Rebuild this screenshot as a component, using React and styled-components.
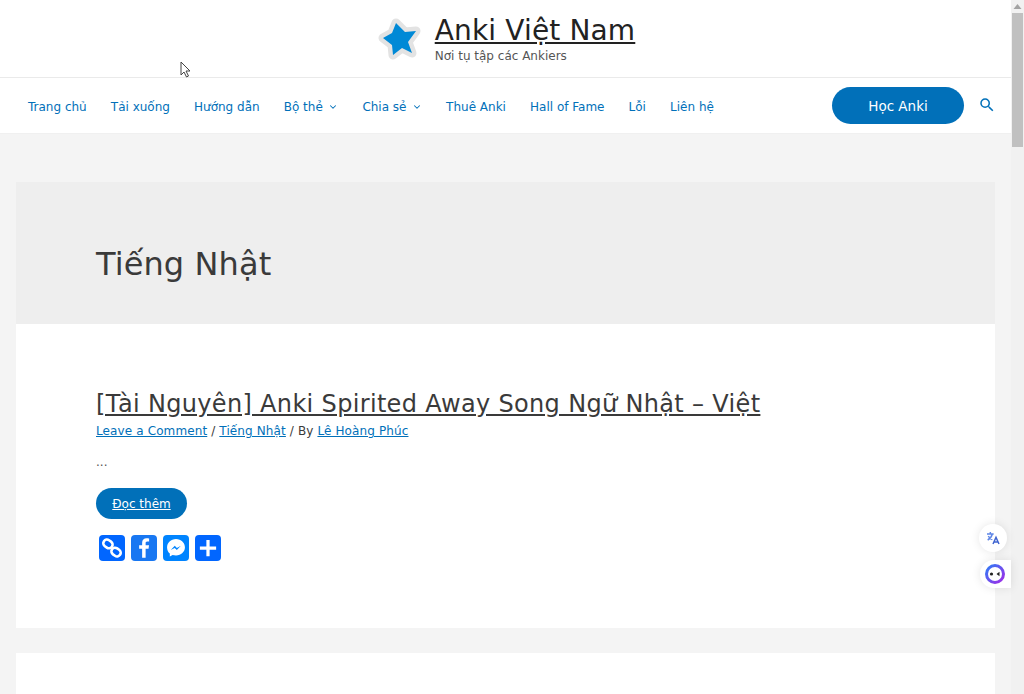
import React from 'react';
import styled, { createGlobalStyle } from 'styled-components';
import { ChevronDown } from 'lucide-react';

const GlobalStyle = createGlobalStyle`
  html, body {
    margin: 0;
    padding: 0;
    height: 100%;
    overflow: hidden;
    background: #f4f4f4;
  }
  #root { height: 100%; }
  * { box-sizing: border-box; }
`;

const Viewport = styled.div`
  position: relative;
  display: flex;
  width: 1024px;
  height: 694px;
  overflow: hidden;
  font-family: 'DejaVu Sans', Verdana, sans-serif;
  color: #3a3a3a;
`;

const Page = styled.div`
  flex: 1;
  min-width: 0;
  background: #f4f4f4;
`;

const Header = styled.header`
  background: #fff;
  border-bottom: 1px solid #f0f0f0;
`;

const Branding = styled.div`
  height: 78px;
  display: flex;
  align-items: center;
  justify-content: center;
  gap: 13px;
  border-bottom: 1px solid #eaeaea;
`;

const BrandText = styled.div`
  display: flex;
  flex-direction: column;
`;

const SiteTitle = styled.a`
  font-size: 28px;
  line-height: 36px;
  letter-spacing: 0.15px;
  color: #222;
  text-decoration: underline;
`;

const Tagline = styled.span`
  margin-top: -1px;
  font-size: 12px;
  line-height: 16px;
  color: #555;
`;

const NavBar = styled.nav`
  height: 55px;
  display: flex;
  align-items: center;
  padding: 0 15px 0 28px;
`;

const NavList = styled.div`
  flex: 1;
  display: flex;
  align-items: center;
  gap: 24.1px;
`;

const NavLink = styled.a`
  display: flex;
  align-items: center;
  gap: 5.5px;
  padding-top: 2px;
  font-size: 12px;
  color: #0170b9;
  white-space: nowrap;
`;

const CtaButton = styled.a`
  width: 132px;
  height: 37px;
  display: flex;
  align-items: center;
  justify-content: center;
  border-radius: 19px;
  background: #0170b9;
  color: #fff;
  font-size: 13.5px;
`;

const SearchIcon = styled.svg`
  width: 18px;
  height: 18px;
  margin-left: 14px;
  margin-bottom: 2px;
  fill: #0170b9;
`;

const Main = styled.main`
  padding: 48px 16px 0;
`;

const Banner = styled.section`
  height: 142px;
  display: flex;
  align-items: center;
  padding: 22px 0 0 80px;
  background: #eee;
`;

const BannerTitle = styled.h1`
  margin: 0;
  font-size: 32px;
  font-weight: 400;
  letter-spacing: 0.1px;
  color: #3a3a3a;
`;

const Article = styled.article`
  height: 304px;
  padding: 65px 80px 0;
  background: #fff;
`;

const ArticleTitle = styled.a`
  display: block;
  font-size: 24px;
  line-height: 30px;
  letter-spacing: 0.33px;
  color: #3a3a3a;
  text-decoration: underline;
`;

const Meta = styled.div`
  font-size: 12px;
  line-height: 18px;
  letter-spacing: 0.12px;
  margin-top: 3px;
  color: #3a3a3a;
`;

const MetaLink = styled.a`
  color: #0170b9;
  text-decoration: underline;
`;

const Excerpt = styled.p`
  margin: 13px 0 0;
  font-size: 12px;
  line-height: 18px;
  color: #555;
`;

const ReadMore = styled.a`
  display: inline-flex;
  align-items: center;
  justify-content: center;
  width: 91px;
  height: 31px;
  margin-top: 17px;
  border-radius: 16px;
  background: #0170b9;
  color: #fff;
  font-size: 12px;
  text-decoration: underline;
`;

const ShareRow = styled.div`
  display: flex;
  gap: 6px;
  margin-top: 16px;
  padding-left: 3px;
`;

const ShareIcon = styled.svg`
  display: block;
  width: 26px;
  height: 26px;
  border-radius: 4px;
  background: ${(p) => p.$bg};
`;

const NextCard = styled.div`
  height: 60px;
  margin-top: 25px;
  background: #fff;
`;

const Scrollbar = styled.div`
  flex: none;
  width: 13px;
  display: flex;
  flex-direction: column;
  align-items: center;
  background: #f1f1f1;
`;

const ScrollArrow = styled.svg`
  width: 13px;
  height: 13px;
  fill: #a3a3a3;
`;

const ScrollThumb = styled.div`
  width: 11px;
  height: 134px;
  background: #c0c0c0;
`;

const FloatButton = styled.div`
  position: absolute;
  top: ${(p) => p.$top}px;
  left: ${(p) => p.$left}px;
  width: ${(p) => p.$w}px;
  height: 28px;
  display: flex;
  align-items: center;
  padding-left: ${(p) => (p.$tab ? 4 : 6)}px;
  background: #fff;
  border-radius: ${(p) => (p.$tab ? '14px 0 0 14px' : '50%')};
  box-shadow: 0 0 10px rgba(0, 0, 0, 0.1);
`;

const Cursor = styled.svg`
  position: absolute;
  top: 61px;
  left: 180px;
  width: 12px;
  height: 18px;
`;

const StarLogo = () => (
  <svg width="46" height="48" viewBox="0 0 46 48" style={{ display: 'block' }}>
    <path
      d="M20 8 L29 17 L40 16 L32 27 L36 38 L26 33 L17 40 L16 30 L7 23 L16 18 Z"
      fill="#0089d6"
      stroke="#e3e3e3"
      strokeWidth="9"
      strokeLinejoin="round"
      paintOrder="stroke"
    />
  </svg>
);

const navItems = [
  { label: 'Trang chủ' },
  { label: 'Tải xuống' },
  { label: 'Hướng dẫn' },
  { label: 'Bộ thẻ', caret: true },
  { label: 'Chia sẻ', caret: true },
  { label: 'Thuê Anki' },
  { label: 'Hall of Fame' },
  { label: 'Lỗi' },
  { label: 'Liên hệ' },
];

const App = () => (
  <Viewport>
    <GlobalStyle />
    <Page>
      <Header>
        <Branding>
          <StarLogo />
          <BrandText>
            <SiteTitle>Anki Việt Nam</SiteTitle>
            <Tagline>Nơi tụ tập các Ankiers</Tagline>
          </BrandText>
        </Branding>
        <NavBar>
          <NavList>
            {navItems.map((item) => (
              <NavLink key={item.label}>
                {item.label}
                {item.caret && <ChevronDown size={10} strokeWidth={2.5} />}
              </NavLink>
            ))}
          </NavList>
          <CtaButton>Học Anki</CtaButton>
          <SearchIcon viewBox="0 0 24 24">
            <path d="M15.5 14h-.79l-.28-.27A6.47 6.47 0 0 0 16 9.5 6.5 6.5 0 1 0 9.5 16c1.61 0 3.09-.59 4.23-1.57l.27.28v.79l5 4.99L20.49 19l-4.99-5zm-6 0C7.01 14 5 11.99 5 9.5S7.01 5 9.5 5 14 7.01 14 9.5 11.99 14 9.5 14z" />
          </SearchIcon>
        </NavBar>
      </Header>
      <Main>
        <Banner>
          <BannerTitle>Tiếng Nhật</BannerTitle>
        </Banner>
        <Article>
          <ArticleTitle>[Tài Nguyên] Anki Spirited Away Song Ngữ Nhật – Việt</ArticleTitle>
          <Meta>
            <MetaLink>Leave a Comment</MetaLink> / <MetaLink>Tiếng Nhật</MetaLink> / By{' '}
            <MetaLink>Lê Hoàng Phúc</MetaLink>
          </Meta>
          <Excerpt>...</Excerpt>
          <ReadMore>Đọc thêm</ReadMore>
          <ShareRow>
            <ShareIcon $bg="#0166ff" viewBox="0 0 32 32" fill="none" stroke="#fff" strokeWidth="3.2">
              <rect x="5" y="6.5" width="12" height="9" rx="4.5" transform="rotate(35 11 11)" />
              <rect x="15" y="16.5" width="12" height="9" rx="4.5" transform="rotate(35 21 21)" />
            </ShareIcon>
            <ShareIcon $bg="#1877f2" viewBox="0 0 32 32" fill="#fff">
              <path d="M18 28V17h3.6l.6-4.3H18v-2.6c0-1.2.4-2.1 2.1-2.1h2.2V4.2c-.4 0-1.7-.2-3.2-.2-3.2 0-5.4 2-5.4 5.5v3.2H10V17h3.7v11H18z" />
            </ShareIcon>
            <ShareIcon $bg="#0084ff" viewBox="0 0 32 32">
              <path
                fill="#fff"
                d="M16 5C9.7 5 5 9.500 5 15.300c0 3.100 1.300 5.700 3.400 7.500v3.700l3.400-1.900c1.300.4 2.700.6 4.200.6 6.300 0 11-4.500 11-10S22.300 5 16 5z"
              />
              <path fill="#0084ff" d="M9.500 18.600l5-5.300 2.600 2.700 4.900-2.700-5 5.300-2.600-2.700z" />
            </ShareIcon>
            <ShareIcon $bg="#0166ff" viewBox="0 0 32 32" fill="#fff">
              <path d="M14 6h4v8h8v4h-8v8h-4v-8H6v-4h8z" />
            </ShareIcon>
          </ShareRow>
        </Article>
        <NextCard />
      </Main>
    </Page>
    <Scrollbar>
      <ScrollArrow viewBox="0 0 13 13">
        <path d="M6.500 4l4 5h-8z" />
      </ScrollArrow>
      <ScrollThumb />
    </Scrollbar>

    <FloatButton $top={524} $left={979} $w={28}>
      <svg width="16" height="16" viewBox="0 0 24 24" fill="none" stroke="#5f86e6" strokeWidth="2.2">
        <path d="M3 6h10M8 3v3M11 6c-1 4-3.500 7-7 9M5 9c1 2.500 3.500 4.500 6 5.500" />
        <path d="M12 21l4.500-10 4.500 10M13.700 18h5.600" stroke="#3f64d0" />
      </svg>
    </FloatButton>
    <FloatButton $top={560} $left={980} $w={31} $tab>
      <svg width="22" height="22" viewBox="0 0 22 22">
        <defs>
          <linearGradient id="ring" x1="0" y1="0" x2="1" y2="1">
            <stop offset="0" stopColor="#2f7bf5" />
            <stop offset="1" stopColor="#a12ce8" />
          </linearGradient>
        </defs>
        <circle cx="11" cy="11" r="8.500" fill="#fff" stroke="url(#ring)" strokeWidth="3" />
        <circle cx="7.500" cy="11" r="1.600" fill="#222" />
        <path d="M15.500 8.800l-3 2.200 3 2.200z" fill="#222" />
      </svg>
    </FloatButton>

    <Cursor viewBox="0 0 12 18">
      <path d="M1 1v13l3-3 2.500 5 2-1-2.500-5h4z" fill="#fff" stroke="#444" strokeWidth="1" strokeLinejoin="round" />
    </Cursor>
  </Viewport>
);

export default App;
